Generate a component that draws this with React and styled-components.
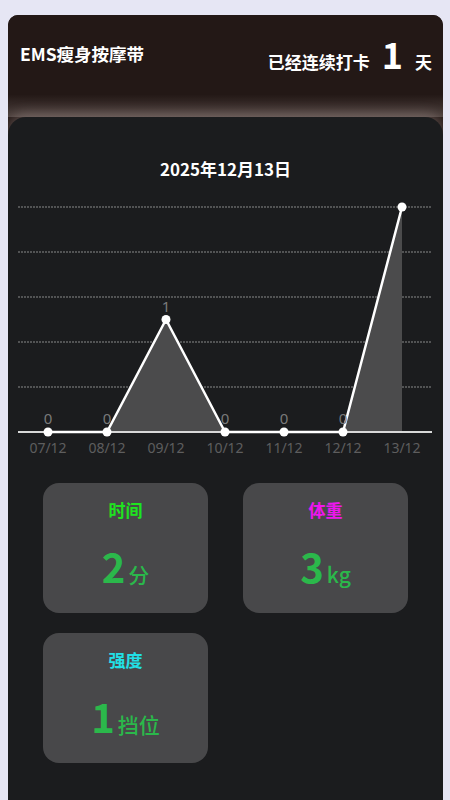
import React from 'react';
import styled, { createGlobalStyle } from 'styled-components';

const GlobalStyle = createGlobalStyle`
    html, body {
        margin: 0;
        padding: 0;
        background: #e6e6f4;
        font-family: "Noto Sans CJK SC", "Noto Sans", sans-serif;
    }
`;

const Page = styled.div`
    padding: 15px 7px 0 8px;
    height: 800px;
    box-sizing: border-box;
    overflow: hidden;
`;

const Shell = styled.div`
    background: #231816;
    border-radius: 10px 10px 0 0;
    height: 785px;
    display: flex;
    flex-direction: column;
    overflow: hidden;
`;

const Header = styled.div`
    display: flex;
    justify-content: space-between;
    align-items: flex-start;
    padding: 24px 11px 0 12px;
    height: 78px;
    color: #fff;
    background: linear-gradient(to bottom, #231816 0%, #231816 78%, #4d413e 100%);
`;

const Title = styled.div`
    font-size: 17.5px;
    font-weight: 700;
    line-height: 30px;
`;

const Streak = styled.div`
    display: flex;
    align-items: baseline;
    font-size: 17px;
    font-weight: 700;
    gap: 12px;
    margin-top: -6px;
`;

const StreakNum = styled.span`
    font-size: 36px;
    font-weight: 700;
    line-height: 40px;
`;

const Panel = styled.div`
    flex: 1;
    background: #1b1c1e;
    border-radius: 18px 18px 0 0;
    box-shadow: 0 -4px 12px rgba(190, 170, 165, 0.35);
    display: flex;
    flex-direction: column;
    align-items: stretch;
    padding-top: 37px;
`;

const DateText = styled.div`
    text-align: center;
    color: #fff;
    font-size: 17px;
    font-weight: 700;
    line-height: 30px;
`;

const ChartSvg = styled.svg`
    display: block;
    margin-top: 13px;
`;

const Cards = styled.div`
    display: grid;
    grid-template-columns: 165px 165px;
    column-gap: 35px;
    row-gap: 20px;
    padding: 16px 0 0 35px;
`;

const Card = styled.div`
    height: 130px;
    border-radius: 16px;
    background: #48484a;
    display: flex;
    flex-direction: column;
    align-items: center;
    padding-top: 13px;
    box-sizing: border-box;
`;

const CardTitle = styled.div`
    font-size: 17px;
    font-weight: 700;
    line-height: 28px;
    color: ${({ tone }) => tone};
`;

const CardValue = styled.div`
    margin-top: 18px;
    color: #2bb84b;
    display: flex;
    align-items: baseline;
    gap: 3px;
`;

const Big = styled.span`
    font-size: 40px;
    font-weight: 700;
    line-height: 48px;
`;

const Unit = styled.span`
    font-size: 21px;
    font-weight: 500;
`;

const days = ['07/12', '08/12', '09/12', '10/12', '11/12', '12/12', '13/12'];
const values = [0, 0, 1, 0, 0, 0, 2];

// chart coordinates are relative to the panel (page x - 8)
const xs = [40, 99, 158, 217, 276, 335, 394];
const base = 235;
const top = 10;
const yOf = (v) => base - ((base - top) * v) / 2;

const Chart = () => {
    const pts = xs.map((x, i) => [x, yOf(values[i])]);
    const line = pts.map((p) => p.join(',')).join(' ');
    const area = `${xs[0]},${base} ${line} ${xs[6]},${base}`;
    const grid = [0, 1, 2, 3, 4].map((i) => top + i * 45);

    return (
        <ChartSvg width="435" height="270" viewBox="0 0 435 270">
            {grid.map((y) => (
                <line
                    key={y}
                    x1="10"
                    x2="424"
                    y1={y}
                    y2={y}
                    stroke="#8a8a8a"
                    strokeWidth="1"
                    strokeDasharray="2 1"
                />
            ))}
            <polygon points={area} fill="#4b4b4c" />
            <line x1="10" x2="424" y1={base} y2={base} stroke="#d8d8d8" strokeWidth="2" />
            <polyline points={line} fill="none" stroke="#fff" strokeWidth="2.5" strokeLinejoin="round" />
            {pts.map(([x, y], i) => (
                <g key={days[i]}>
                    {i < 6 && (
                        <text
                            x={x}
                            y={y - 8}
                            fill="#7a7a7a"
                            fontSize="15"
                            textAnchor="middle"
                            fontFamily="Noto Sans, sans-serif"
                        >
                            {values[i]}
                        </text>
                    )}
                    <circle cx={x} cy={y} r="4.5" fill="#fff" />
                    <text
                        x={x}
                        y={base + 21}
                        fill="#5e5e5e"
                        fontSize="14"
                        textAnchor="middle"
                        fontFamily="Noto Sans, sans-serif"
                    >
                        {days[i]}
                    </text>
                </g>
            ))}
        </ChartSvg>
    );
};

const stats = [
    { title: '时间', tone: '#1fe41f', value: '2', unit: '分' },
    { title: '体重', tone: '#ee16ee', value: '3', unit: 'kg' },
    { title: '强度', tone: '#22e0e6', value: '1', unit: '挡位' },
];

const App = () => (
    <>
        <GlobalStyle />
        <Page>
            <Shell>
                <Header>
                    <Title>EMS瘦身按摩带</Title>
                    <Streak>
                        <span>已经连续打卡</span>
                        <StreakNum>1</StreakNum>
                        <span>天</span>
                    </Streak>
                </Header>
                <Panel>
                    <DateText>2025年12月13日</DateText>
                    <Chart />
                    <Cards>
                        {stats.map((s) => (
                            <Card key={s.title}>
                                <CardTitle tone={s.tone}>{s.title}</CardTitle>
                                <CardValue>
                                    <Big>{s.value}</Big>
                                    <Unit>{s.unit}</Unit>
                                </CardValue>
                            </Card>
                        ))}
                    </Cards>
                </Panel>
            </Shell>
        </Page>
    </>
);

export default App;
